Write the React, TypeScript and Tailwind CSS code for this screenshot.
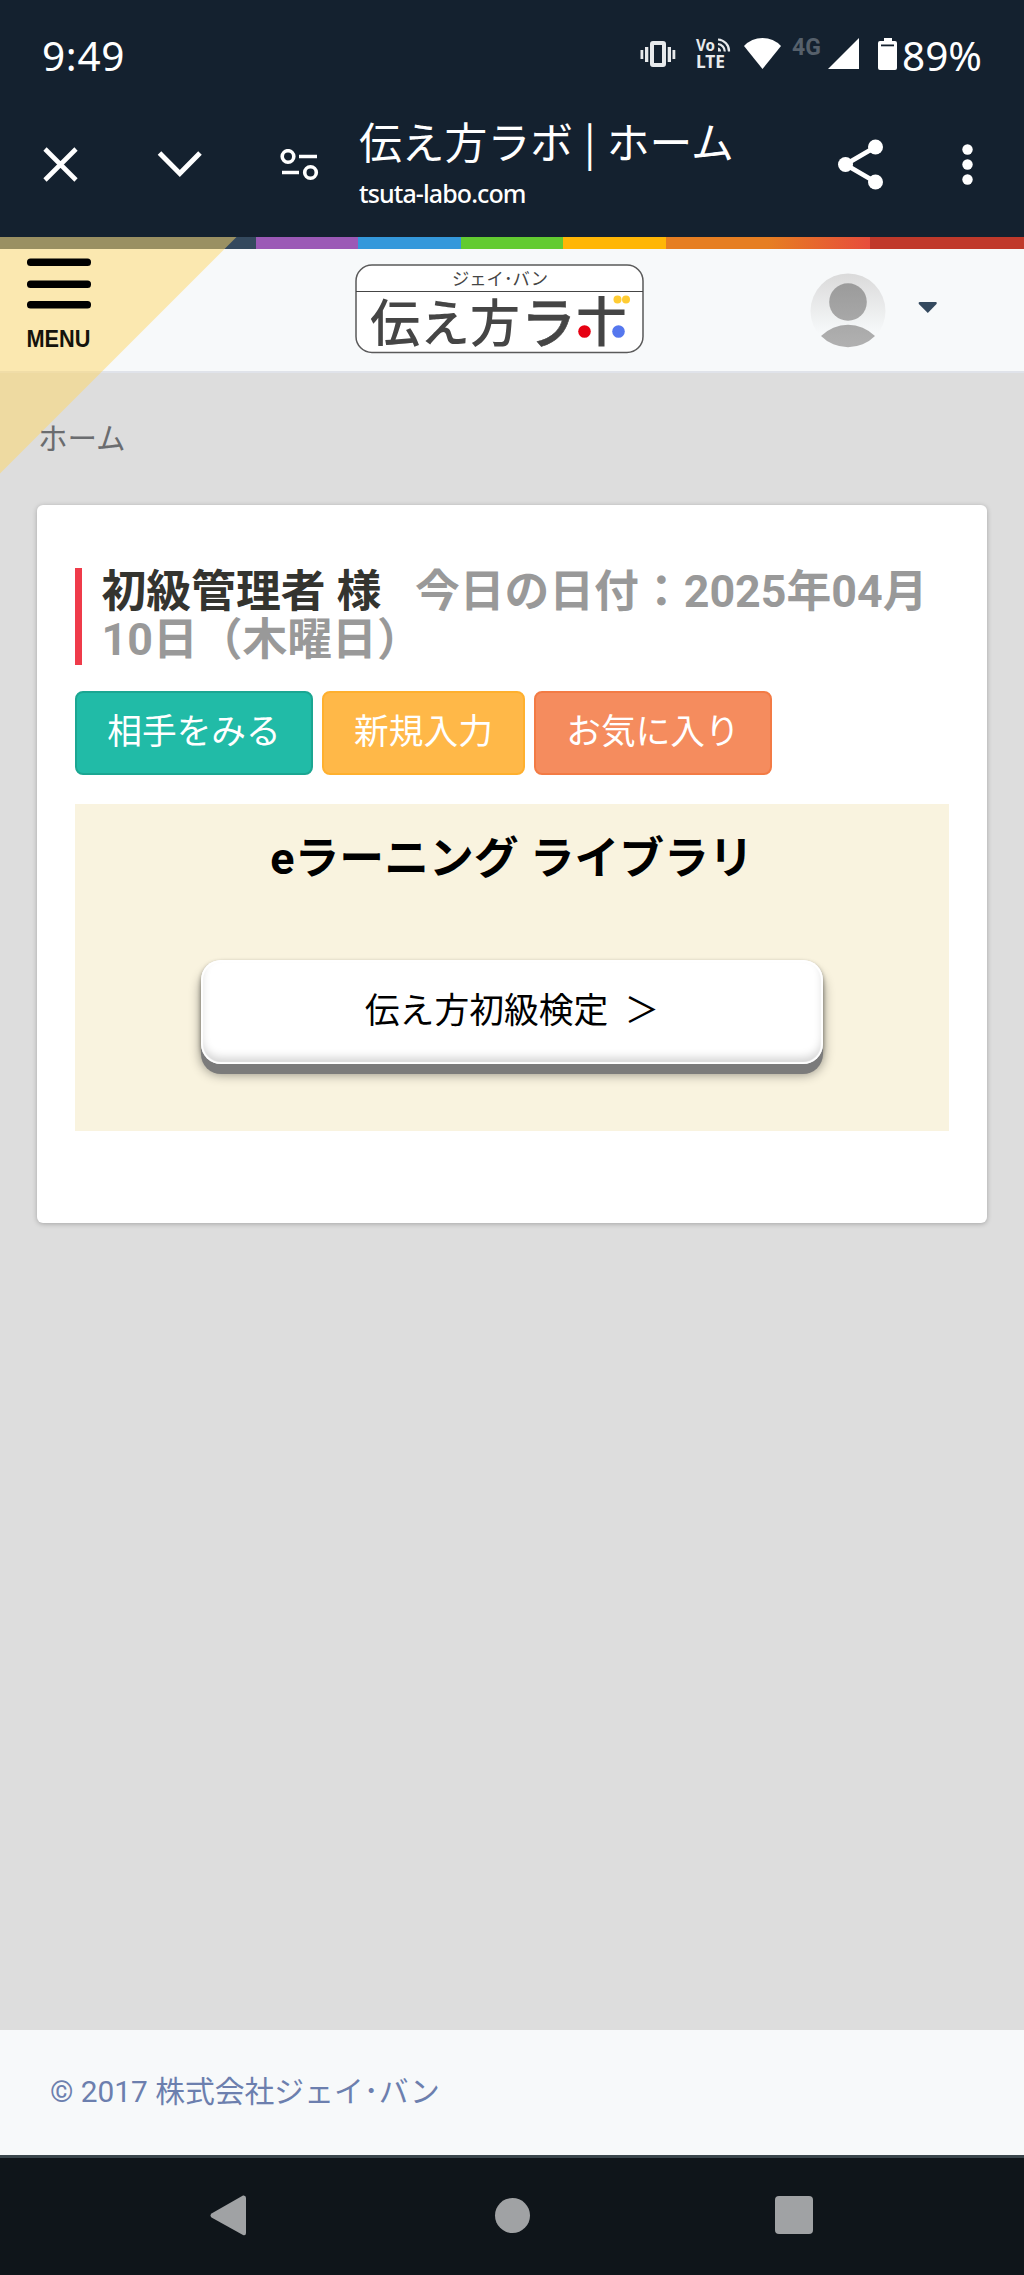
import React from 'react';

const jpFont = "font-['Roboto','Noto_Sans_CJK_JP',sans-serif]";

const StatusBar: React.FC = () => (
  <div className="flex h-28 items-start justify-between pl-[42px] pr-[42px] pt-7 text-[40.500px] leading-[56px] text-white font-['Noto_Sans',sans-serif]">
    <span className="tracking-[0.7px]">9:49</span>
    <div className="flex items-start">
      {/* Vibrate */}
      <svg className="mt-[12px] mr-5" width="36" height="30" viewBox="0 0 36 30" fill="#e8eaec">
        <rect x="12" y="3" width="12" height="22" rx="1" fill="none" stroke="#e8eaec" strokeWidth="4" />
        <rect x="0.5" y="10" width="2.8" height="9" />
        <rect x="5" y="7" width="3.3" height="15" />
        <rect x="27.700" y="7" width="3.3" height="15" />
        <rect x="32.5" y="10" width="2.8" height="9" />
      </svg>
      {/* VoLTE */}
      <svg className="mt-1.5 mr-3 overflow-visible" width="36" height="38" viewBox="0 -4 36 38" fill="#e8eaec">
        <text x="0" y="12.500" fontSize="15.500" fontWeight="700" textLength="19" lengthAdjust="spacingAndGlyphs" className="font-['Noto_Sans',sans-serif]">Vo</text>
        <text x="0" y="30" fontSize="17" fontWeight="700" textLength="29" lengthAdjust="spacingAndGlyphs" className="font-['Noto_Sans',sans-serif]">LTE</text>
        <g fill="none" stroke="#e8eaec" strokeWidth="2.2">
          <path d="M22 1.5a11.5 11.5 0 0 1 11 12" />
          <path d="M22 6a7.5 7.5 0 0 1 6.800 7.500" />
        </g>
        <path d="M22 9.500a4 4 0 0 1 3 4h-3z" />
      </svg>
      {/* Wi-Fi */}
      <svg className="mt-2.5" width="37" height="31" viewBox="0 0 37 31" fill="#fff">
        <path d="M0 8Q7.500 0 18.500 0T37 8L18.500 31Z" />
      </svg>
      <span className="ml-[11px] mt-1.5 w-[32px] text-[23px] leading-[28px] font-bold text-[#56606b] font-['Roboto',sans-serif]">4G</span>
      {/* Signal */}
      <svg className="mt-2.5 ml-[4px]" width="31" height="31" viewBox="0 0 31 31" fill="#fff">
        <path d="M31 0v31H0z" />
      </svg>
      {/* Battery */}
      <svg className="mt-2.5 ml-[19px] mr-[5px]" width="19" height="32" viewBox="0 0 19 32" fill="#fff">
        <path d="M6 0h8v3h3a2 2 0 0 1 2 2v25a2 2 0 0 1-2 2H2a2 2 0 0 1-2-2V5a2 2 0 0 1 2-2h4z" />
        <rect x="3" y="6.500" width="13" height="1.800" fill="#14212f" />
      </svg>
      <span>89%</span>
    </div>
  </div>
);

const BrowserBar: React.FC = () => (
  <div className="flex h-[125px] items-start text-white">
    <svg className="mt-[35px] ml-[43px]" width="35" height="35" viewBox="0 0 35 35" stroke="#fff" strokeWidth="4.600">
      <path d="M2 2l31 31M33 2L2 33" />
    </svg>
    <svg className="mt-[38px] ml-[79px]" width="46" height="28" viewBox="0 0 46 28" fill="none" stroke="#fff" strokeWidth="5">
      <path d="M2.500 3l20.300 20.500L43 3" />
    </svg>
    <svg className="mt-[37px] ml-[77px]" width="39" height="32" viewBox="0 0 39 32" fill="none" stroke="#fff" strokeWidth="3.600">
      <circle cx="8" cy="7.500" r="5.800" />
      <path d="M19 7.500h18M2 23.500h17" />
      <circle cx="30.500" cy="23.500" r="5.800" />
    </svg>
    <div className="ml-[40px] mt-px w-[400px]">
      <p className="text-[42.800px] leading-[54px] [word-spacing:1.500px] whitespace-nowrap font-['Noto_Sans_CJK_JP',sans-serif]">伝え方ラボ | ホーム</p>
      <p className="mt-[10px] text-[25px] leading-[32px] font-medium tracking-[-0.9px] font-['Noto_Sans',sans-serif]">tsuta-labo.com</p>
    </div>
    <svg className="mt-[27px] ml-[79px]" width="46" height="51" viewBox="0 0 46 51" fill="#fff">
      <path d="M37.500 8L7.500 25.500l30 17.500" fill="none" stroke="#fff" strokeWidth="4.800" />
      <circle cx="37.500" cy="8" r="7.500" />
      <circle cx="7.500" cy="25.500" r="7.500" />
      <circle cx="37.500" cy="43" r="7.500" />
    </svg>
    <svg className="mt-8 ml-[78px]" width="12" height="42" viewBox="0 0 12 42" fill="#fff">
      <circle cx="5.500" cy="5.500" r="5.200" />
      <circle cx="5.500" cy="20.500" r="5.200" />
      <circle cx="5.500" cy="35.500" r="5.200" />
    </svg>
  </div>
);

const Logo: React.FC = () => (
  <svg width="290" height="90" viewBox="0 0 290 90" fill="#454545" className="overflow-visible font-['Noto_Sans_CJK_JP',sans-serif]">
    <rect x="1" y="1" width="287" height="87.500" rx="16" fill="#fff" stroke="#5a5a5a" strokeWidth="1.500" />
    <path d="M1 27.500h287" stroke="#454545" strokeWidth="1.200" />
    <text x="97" y="21" fontSize="17.500" textLength="96" lengthAdjust="spacingAndGlyphs">ジェイ･バン</text>
    <text x="15" y="77.500" fontSize="51" fontWeight="500" textLength="150" lengthAdjust="spacingAndGlyphs">伝え方</text>
    <text x="166" y="78.500" fontSize="55" fontWeight="500" stroke="#454545" strokeWidth="0.6">ラ</text>
    {/* Cross of the last mark with its coloured dots */}
    <path d="M243.500 32h6v50.500h-6zM223.500 45.500h46v5.500h-46z" />
    <circle cx="229.500" cy="67.500" r="6.300" fill="#e60012" />
    <circle cx="263.500" cy="67.500" r="6.300" fill="#5577ee" />
    <circle cx="262.500" cy="35.500" r="4" fill="#ffcc33" />
    <circle cx="271" cy="35.500" r="4" fill="#ffcc33" />
  </svg>
);

const Avatar: React.FC = () => (
  <svg width="76" height="76" viewBox="0 0 76 76">
    <defs>
      <linearGradient id="avatarBg" x1="0" y1="0" x2="0" y2="1">
        <stop offset="0" stopColor="#dadada" />
        <stop offset="0.8" stopColor="#f7f9fa" />
      </linearGradient>
      <linearGradient id="avatarFg" gradientUnits="userSpaceOnUse" x1="0" y1="10" x2="0" y2="75">
        <stop offset="0" stopColor="#9b9b9b" />
        <stop offset="1" stopColor="#b1b1b1" />
      </linearGradient>
    </defs>
    <circle cx="38" cy="38" r="37.500" fill="url(#avatarBg)" />
    <circle cx="38" cy="29" r="18.800" fill="url(#avatarFg)" />
    <path d="M11 63a38 38 0 0 1 54 0a38 38 0 0 1-54 0z" fill="url(#avatarFg)" />
  </svg>
);

const MenuButton: React.FC = () => (
  <svg className="absolute left-0 top-0" width="240" height="240" viewBox="0 0 240 240">
    <path d="M0 0h236.500L0 236.500z" fill="rgba(255,215,102,0.5)" />
    <rect x="27" y="21.500" width="64" height="7.500" rx="3.500" />
    <rect x="27" y="43.500" width="64" height="7.500" rx="3.500" />
    <rect x="27" y="64" width="64" height="7.500" rx="3.500" />
    <text x="26.500" y="110" fontSize="23.500" fontWeight="700" fill="#15130c" textLength="64" lengthAdjust="spacingAndGlyphs" className="font-['Liberation_Sans',sans-serif]">MENU</text>
  </svg>
);

const SiteHeader: React.FC = () => (
  <header>
    <div className="h-3 bg-[linear-gradient(to_right,#34495e_25%,#9b59b6_25%,#9b59b6_35%,#3498db_35%,#3498db_45%,#62cb31_45%,#62cb31_55%,#ffb606_55%,#ffb606_65%,#e67e22_65%,#e67e22_75%,#e74c3c_85%,#c0392b_85%)]" />
    <div className="flex h-[124px] items-start border-b-2 border-[#e0e3ea] bg-[#f7f9fa]">
      <div className="ml-[355px] mt-[15px]">
        <Logo />
      </div>
      <div className="ml-[165px] mt-[24px]">
        <Avatar />
      </div>
      <svg className="ml-8 mt-[53px]" width="20" height="12" viewBox="0 0 20 12" fill="#34495e">
        <path d="M1.500 0h16.500q1.500 .5.500 2L9.800 11L.800 2Q0 .5 1.500 0z" />
      </svg>
    </div>
  </header>
);

const actions = [
  { label: '相手をみる', style: 'w-[238px] bg-[#21bba7] border-[#1ba692]' },
  { label: '新規入力', style: 'w-[203px] bg-[#ffb848] border-[#ffb02e]' },
  { label: 'お気に入り', style: 'w-[238px] bg-[#f58c5e] border-[#f37b45]' },
];

const HomeCard: React.FC = () => (
  <section className="mx-[37px] mt-[42px] h-[718px] rounded-md bg-white px-[38px] pt-[63px] shadow-[0_1px_5px_rgba(0,0,0,0.25)]">
    <h1 className="h-[97px] border-l-[7px] border-[#ef3b4a] pl-[19.500px] text-[44.800px] leading-[48px] font-bold whitespace-nowrap text-[#34342f]">
      初級管理者 様
      <span className="ml-[33.500px] text-[#999]">
        今日の日付：2025年04月
        <br />
        10日（木曜日）
      </span>
    </h1>
    <div className="mt-[26px] flex gap-[9px]">
      {actions.map((action) => (
        <button key={action.label} className={`h-[84px] rounded-lg border-2 pb-0.5 text-[34.700px] text-white whitespace-nowrap ${action.style}`}>
          {action.label}
        </button>
      ))}
    </div>
    <div className="mt-[29px] flex h-[327px] flex-col items-center bg-[#f9f3df] pt-[27px] text-black">
      <h2 className="text-[44.800px] leading-[56px] font-bold">eラーニング ライブラリ</h2>
      <button className="mt-[73px] flex h-[104px] w-[622px] items-center justify-center gap-[16px] rounded-[20px] bg-white pb-px text-[34.800px] shadow-[inset_0_0_1px_2px_#fff,inset_0_-6px_10px_rgba(0,0,0,0.18),0_10px_0_#7b7b7b,0_10px_12px_rgba(0,0,0,0.45),0_2px_4px_rgba(0,0,0,0.4)]">
        <span>伝え方初級検定</span>
        <span>＞</span>
      </button>
    </div>
  </section>
);

const NavBar: React.FC = () => (
  <nav className="flex h-[120px] items-center justify-between border-t-[3px] border-[#3a464c] bg-[#0f151a] pb-[3px] pl-[210px] pr-[211px]">
    <svg width="36" height="41" viewBox="0 0 36 41" fill="#a0a2a4">
      <path d="M33 .500Q36 0 36 3v35q0 3-3 2L1.500 22.500Q-.500 20.500 1.500 18.500z" />
    </svg>
    <div className="ml-[3px] size-[35px] rounded-full bg-[#a0a2a4]" />
    <div className="size-[38px] rounded bg-[#a0a2a4]" />
  </nav>
);

const App: React.FC = () => {
  return (
    <div className={`flex h-[2275px] w-[1024px] flex-col bg-[#ddd] ${jpFont}`}>
      <div className="bg-[#14212f]">
        <StatusBar />
        <BrowserBar />
      </div>

      <div className="relative flex flex-1 flex-col">
        <SiteHeader />
        <MenuButton />
        <main className="flex-1">
          <p className="relative ml-[38px] mt-[42px] text-[29.500px] leading-[48px] text-[#6a6c6f]">ホーム</p>
          <HomeCard />
        </main>
        <footer className="h-[125px] bg-[#f7f9fa] pl-[50px] pt-[38px] text-[29.800px] leading-[48px] text-[#6c7fae]">
          © 2017 株式会社ジェイ･バン
        </footer>
      </div>

      <NavBar />
    </div>
  );
};

export default App;
